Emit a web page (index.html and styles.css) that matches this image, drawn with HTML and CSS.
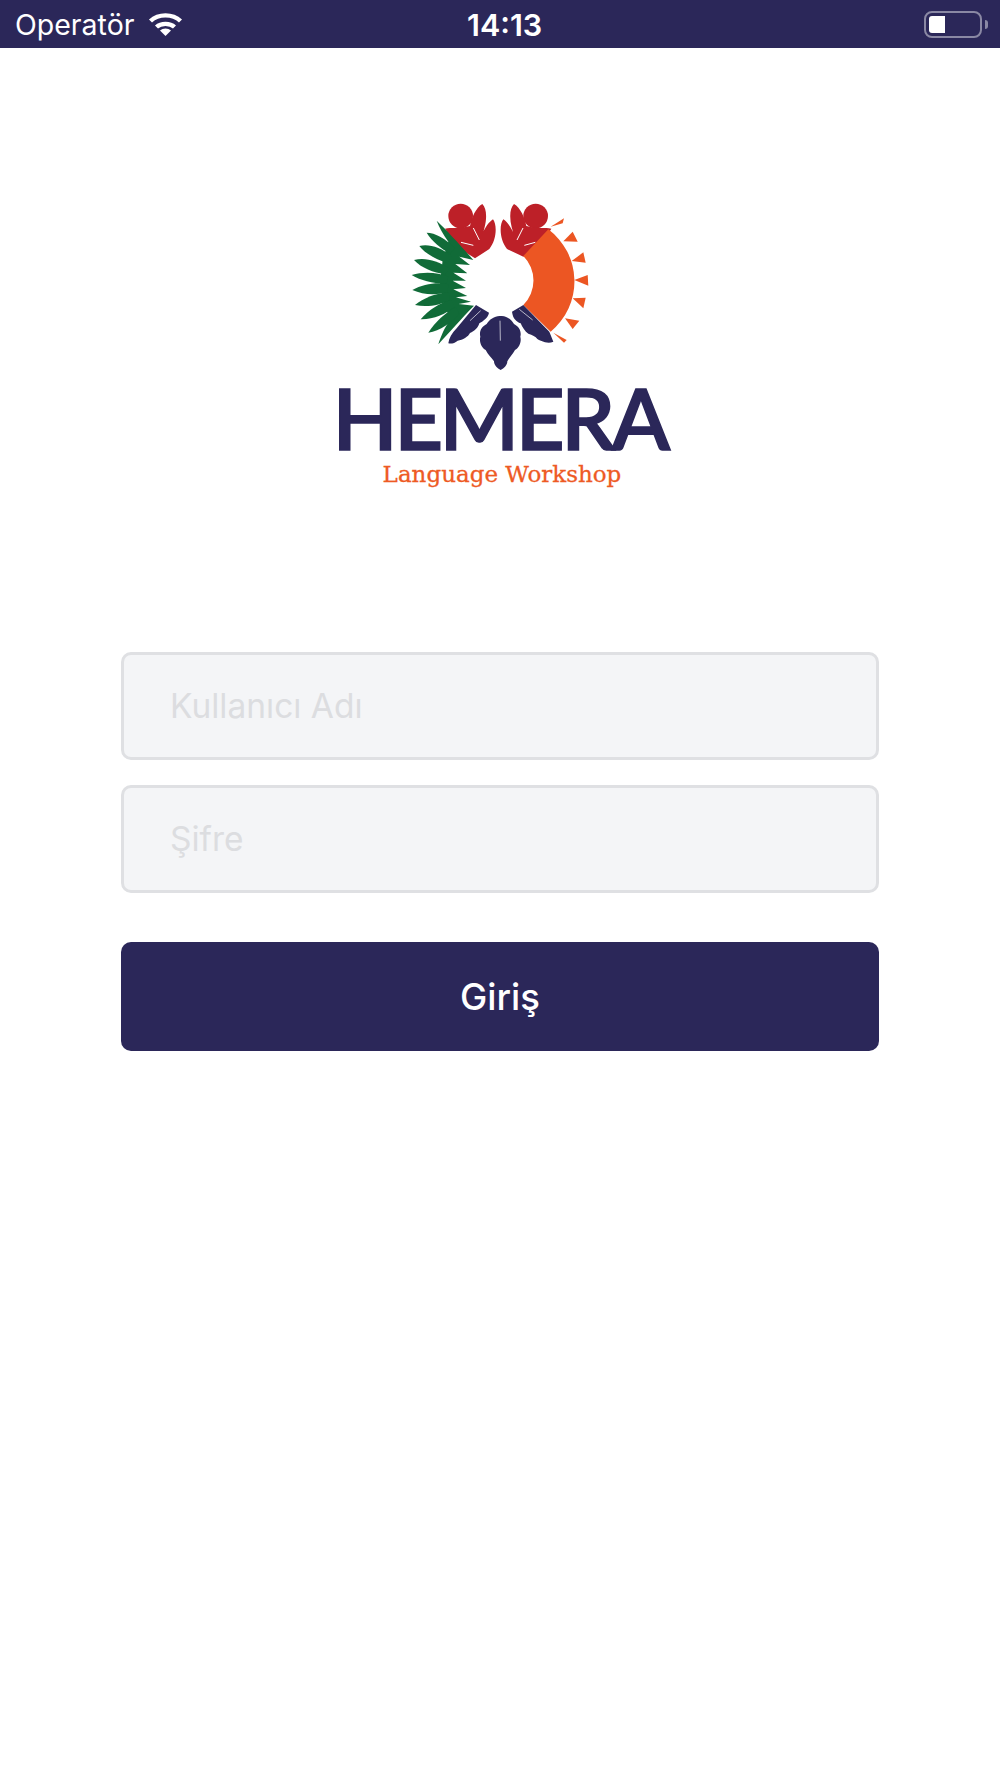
FILE: index.html
```html
<!DOCTYPE html>
<html lang="tr">
<head>
    <meta charset="UTF-8">
    <meta name="viewport" content="width=device-width, initial-scale=1.0">
    <title>Hemera</title>
    <link rel="stylesheet" href="styles.css">
</head>
<body>
    <header class="status-bar">
        <div class="status-left">
            <span class="carrier">Operatör</span>
            <svg class="wifi" viewBox="0 0 34 24" width="35" height="24">
                <path d="M2 9C10 1.500 24 1.500 32 9" class="wifi-arc"/>
                <path d="M8 15C12.500 10.800 21.500 10.800 26 15" class="wifi-arc"/>
                <path d="M17 24L11.500 18.500C14.500 15.800 19.500 15.800 22.500 18.500Z" fill="#fff"/>
            </svg>
        </div>
        <span class="clock">14:13</span>
        <div class="battery">
            <div class="battery-body"><div class="battery-level"></div></div>
            <div class="battery-nub"></div>
        </div>
    </header>

    <main class="login">
        <div class="logo">
            <svg class="emblem" viewBox="0 0 660 570" width="220" height="190">
                <!-- red figures -->
                <g fill="#bd2028">
                    <circle cx="212" cy="78" r="37"/>
                    <path d="M165 116C185 112 205 116 222 112L240 108C244 85 258 52 277 42C294 58 292 105 270 150L276 134C284 115 296 96 309 88C322 105 320 150 298 177L255 205L200 170Z"/>
                    <circle cx="437" cy="78" r="37"/>
                    <path d="M484 116C464 112 444 116 427 112L409 108C405 85 391 52 372 42C355 58 357 105 379 150L373 134C365 115 353 96 340 88C327 105 329 150 351 177L400 200L450 170Z"/>
                </g>
                <g stroke="#fff" stroke-width="3" fill="none">
                    <path d="M213 157L250 166M250 114L268 150"/>
                    <path d="M436 157L403 166M399 114L381 150"/>
                </g>
                <!-- orange arc and sun rays -->
                <path d="M400 198L475 118A195 195 0 0 1 482 425L400 345A104 104 0 0 0 400 198Z" fill="#ec5623"/>
                <g fill="#ec5623">
                    <path d="M482 110L522 85L518 100Z"/>
                    <path d="M520 154L548 125L563 155Z"/>
                    <path d="M545 213L580 187L587 218Z"/>
                    <path d="M553 270L593 255L595 287Z"/>
                    <path d="M548 325L587 323L580 355Z"/>
                    <path d="M525 385L568 392L548 417Z"/>
                    <path d="M490 428L530 450L522 458Z"/>
                </g>
                <!-- navy leaves -->
                <g fill="#2b2759">
                    <path d="M332 378C348 376 364 388 372 402C388 410 395 425 391 440C395 456 388 472 375 480C368 494 358 502 352 514C352 526 342 535 332 540C322 535 312 526 312 514C304 502 294 494 287 480C274 472 267 456 271 440C267 425 274 410 290 402C298 388 316 376 332 378Z"/>
                    <path d="M258 345L297 368C294 384 278 394 268 400C265 412 253 424 240 429C235 440 218 450 203 452C194 459 185 462 175 460C177 445 185 430 200 415Z"/>
                    <path d="M400 345L478 425L490 455C482 459 473 458 465 457C457 453 448 451 442 447C437 439 427 435 415 431C405 425 397 411 392 400C379 394 369 387 366 365Z"/>
                </g>
                <g stroke="#fff" fill="none" stroke-width="2">
                    <path d="M330 392L331 452M272 362L240 392M388 358L428 390"/>
                </g>
                <!-- green palm -->
                <g fill="#116b38">
                    <path d="M140 92C170 120 215 170 250 210L208 200L240 225L196 222L232 250L190 248L228 272L188 272L228 294L190 298L232 318L198 322L243 335L206 342L252 347C215 385 175 430 145 463C152 440 165 410 182 388L160 340L150 280L158 210L175 155C160 135 148 112 140 92Z"/>
                    <path d="M110 128C135 128 168 146 195 175L180 190C152 176 126 154 110 128Z"/>
                    <path d="M88 168C115 160 152 172 185 198L172 220C140 208 106 192 88 168Z"/>
                    <path d="M72 210C105 201 142 212 178 235L166 253C130 248 94 234 72 210Z"/>
                    <path d="M65 255C100 244 142 246 175 260L170 281C130 282 94 272 65 255Z"/>
                    <path d="M67 300C100 282 142 275 175 283L173 306C140 316 100 315 67 300Z"/>
                    <path d="M75 345C100 324 142 307 176 308L180 330C150 346 110 353 75 345Z"/>
                    <path d="M92 388C115 362 150 336 184 331L194 351C166 372 130 389 92 388Z"/>
                    <path d="M115 428C135 397 165 368 198 351L208 371C186 396 150 423 115 428Z"/>
                </g>
            </svg>
            <div class="wordmark">HEMERA</div>
            <div class="tagline">Language Workshop</div>
        </div>

        <form class="login-form">
            <input class="field" type="text" placeholder="Kullanıcı Adı">
            <input class="field" type="password" placeholder="Şifre">
            <button class="submit" type="button">Giriş</button>
        </form>
    </main>
</body>
</html>
```

FILE: styles.css
```css
* {
    box-sizing: border-box;
}

body {
    margin: 0;
    background-color: #fff;
    font-family: Inter, "Noto Sans", sans-serif;
}

.status-bar {
    display: flex;
    justify-content: space-between;
    align-items: center;
    position: relative;
    height: 48px;
    padding: 0 12px 0 15px;
    background-color: #2b2759;
    color: #fff;
}

.status-left {
    display: flex;
    align-items: center;
    gap: 14px;
}

.carrier {
    font-size: 28.5px;
}

.wifi-arc {
    fill: none;
    stroke: #fff;
    stroke-width: 4.4;
}

.clock {
    position: absolute;
    left: 467px;
    font-size: 30.500px;
    font-weight: 600;
}

.battery {
    display: flex;
    align-items: center;
    gap: 3px;
}

.battery-body {
    width: 58px;
    height: 27px;
    padding: 3px;
    border: 2px solid rgba(255, 255, 255, 0.45);
    border-radius: 8px;
}

.battery-level {
    width: 16px;
    height: 100%;
    background-color: #fff;
    border-radius: 3px 0 0 3px;
}

.battery-nub {
    width: 3px;
    height: 9px;
    background-color: rgba(255, 255, 255, 0.45);
    border-radius: 0 3px 3px 0;
}

.login {
    display: flex;
    flex-direction: column;
    align-items: center;
    padding-top: 142px;
}

.logo {
    display: flex;
    flex-direction: column;
    align-items: center;
    height: 462px;
}

.emblem {
    display: block;
    flex-shrink: 0;
}

.wordmark {
    margin-top: 4px;
    margin-left: -1px;
    color: #2b2759;
    -webkit-text-stroke: 1.5px #2b2759;
    font-family: Lato, sans-serif;
    font-size: 85px;
    font-weight: 600;
    line-height: 66px;
    letter-spacing: -3.500px;
}

.tagline {
    margin-top: 10px;
    margin-left: 4px;
    color: #ee5a24;
    -webkit-text-stroke: 0.3px #ee5a24;
    font-family: "DejaVu Serif", serif;
    font-size: 23px;
    line-height: 28px;
}

.login-form {
    display: flex;
    flex-direction: column;
    gap: 25px;
    width: 758px;
}

.field {
    width: 100%;
    height: 108px;
    padding: 0 46px;
    background-color: #f4f5f7;
    border: 3px solid #dfe0e3;
    border-radius: 10px;
    font-family: inherit;
    font-size: 33.500px;
}

.field::placeholder {
    color: #dcdde0;
    opacity: 1;
}

.submit {
    height: 109px;
    margin-top: 24px;
    background-color: #2b2759;
    color: #fff;
    border: none;
    border-radius: 10px;
    font-family: inherit;
    font-size: 36.500px;
    font-weight: 500;
}
```
